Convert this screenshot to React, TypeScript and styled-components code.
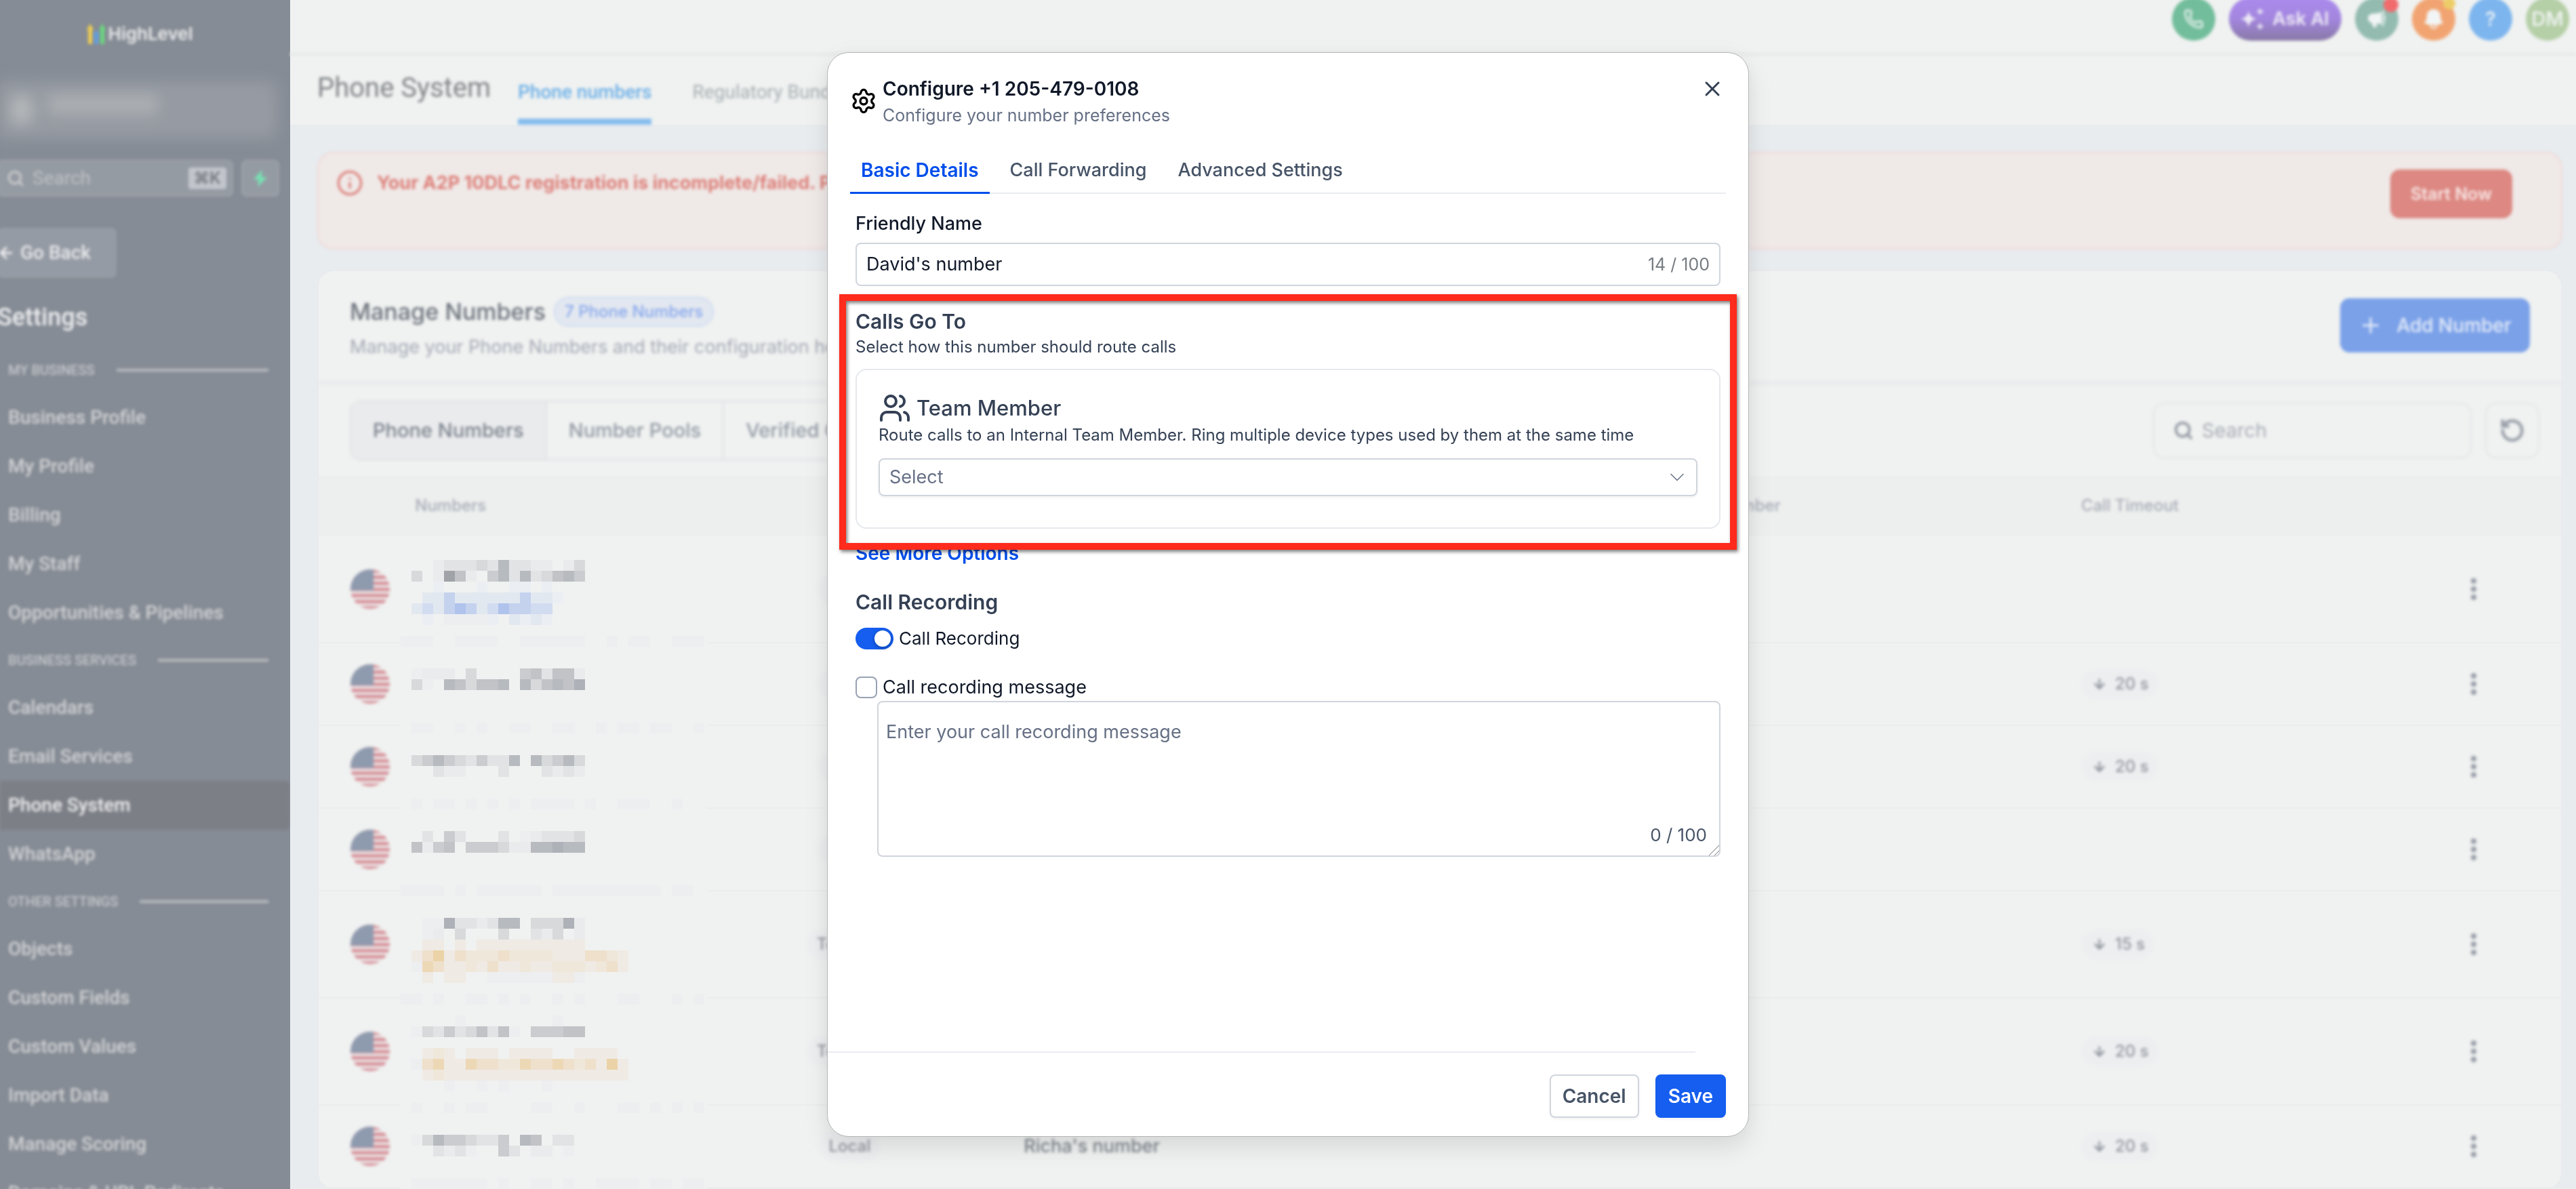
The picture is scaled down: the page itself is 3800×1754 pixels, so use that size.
import React, { useState } from "react";
import styled, { createGlobalStyle, css } from "styled-components";
import {
  ArrowDown,
  ArrowLeft,
  ChevronDown,
  Info,
  Phone,
  Plus,
  RotateCcw,
  Search,
  Settings,
  Users,
  X,
} from "lucide-react";
import { HiMegaphone, HiBell } from "react-icons/hi2";

const GlobalStyle = createGlobalStyle`
  *, *::before, *::after { box-sizing: border-box; }
  body {
    margin: 0;
    background: #eff1f1;
    font-family: Inter, "Liberation Sans", sans-serif;
    font-size: 27px;
    line-height: 40px;
    color: #101828;
  }
  button, input, select, textarea { font: inherit; color: inherit; margin: 0; }
  button { padding: 0; border: 0; background: none; cursor: pointer; }
  h1, h2, h3, p { margin: 0; font-size: inherit; font-weight: inherit; }
`;

/* Everything behind the dialog is slightly out of focus. */
const defocused = css`
  filter: blur(2px);
`;

const Page = styled.div`
  display: flex;
  height: 100vh;
  overflow: hidden;
`;

/* ---------- sidebar ---------- */

const Sidebar = styled.aside`
  flex: 0 0 428px;
  overflow: hidden;
  background: #868c95;
  color: #c9cbcd;
  font-family: Roboto, "Liberation Sans", sans-serif;
  font-size: 28px;
`;

const SidebarInner = styled.div`
  ${defocused}
`;

const Logo = styled.div`
  display: flex;
  align-items: center;
  justify-content: center;
  gap: 2px;
  height: 100px;
  padding-right: 16px;
  color: #eaebec;
  font: 600 26px/32px Inter, "Liberation Sans", sans-serif;
`;

const SidebarTop = styled.div`
  display: flex;
  flex-direction: column;
  align-items: flex-start;
  margin-left: -4px;
`;

const Account = styled.div`
  display: flex;
  align-items: center;
  gap: 24px;
  width: 412px;
  height: 84px;
  margin: 20px 0 32px;
  padding: 0 20px;
  border-radius: 12px;
  background: #969ba3;
  filter: blur(10px);
`;

const AccountAvatar = styled.div`
  width: 32px;
  height: 44px;
  border-radius: 16px;
  background: #b4b8b9;
`;

const AccountName = styled.div`
  width: 160px;
  height: 28px;
  margin-bottom: 16px;
  background: #acb0b3;
`;

const SearchRow = styled.div`
  display: flex;
  gap: 12px;
  margin-bottom: 46px;
`;

const SideSearch = styled.label`
  display: flex;
  align-items: center;
  gap: 12px;
  width: 348px;
  height: 54px;
  padding: 0 8px 0 12px;
  border: 2px solid #9fa3ab;
  border-radius: 8px;
  background: #959ba3;
`;

const SideSearchInput = styled.input`
  flex: 1;
  min-width: 0;
  padding: 0;
  border: 0;
  outline: 0;
  background: none;
  &::placeholder { color: #bdc0c5; opacity: 1; }
`;

const Shortcut = styled.kbd`
  padding: 0 8px;
  border-radius: 4px;
  background: #c2c5cc;
  color: #73777e;
  font: 600 24px/32px Inter, "DejaVu Sans", sans-serif;
`;

const QuickButton = styled.button`
  display: grid;
  place-items: center;
  width: 56px;
  height: 54px;
  border: 2px solid #9fa3ab;
  border-radius: 8px;
  background: #959ba3;
`;

const GoBack = styled.button`
  display: flex;
  align-items: center;
  gap: 8px;
  width: 176px;
  height: 74px;
  margin-bottom: 36px;
  border-radius: 8px;
  background: #959ba4;
  color: #e9eaec;
  font-weight: 500;
`;

const SidebarTitle = styled.h2`
  margin-bottom: 22px;
  color: #ebecee;
  font-size: 36px;
  line-height: 44px;
  font-weight: 500;
`;

const GroupTitle = styled.h3`
  display: flex;
  align-items: center;
  gap: 32px;
  height: 68px;
  padding: 0 32px 0 12px;
  color: #c4c6cc;
  font-size: 20px;
  font-weight: 500;
  white-space: nowrap;
  &::after { content: ""; flex: 1; height: 4px; background: #b8bbc1; }
`;

const NavLink = styled.a<{ $active?: boolean }>`
  display: flex;
  align-items: center;
  height: 72px;
  padding-left: 12px;
  border-radius: 0 8px 8px 0;
  background: ${(p) => (p.$active ? "#7c7f86" : "transparent")};
  color: ${(p) => (p.$active ? "#edeeef" : "#d0d2d4")};
  font-weight: 500;
  text-decoration: none;
  white-space: nowrap;
`;

/* ---------- main area ---------- */

const Main = styled.main`
  flex: 1;
  min-width: 0;
  display: flex;
  flex-direction: column;
  background: #e8ecef;
`;

const TopBar = styled.header`
  flex: none;
  height: 80px;
  background: #f0f2f1;
`;

const TopBarInner = styled.div`
  ${defocused}
  display: flex;
  align-items: flex-end;
  justify-content: flex-end;
  gap: 20px;
  height: 82px;
  padding: 0 10px 18px 0;
  border-bottom: 4px solid #e6e8e8;
`;

const RoundButton = styled.button<{ $tone: string }>`
  position: relative;
  display: grid;
  place-items: center;
  width: 64px;
  height: 64px;
  border-radius: 50%;
  background: ${(p) => p.$tone};
  color: #f2f5f5;
  font-size: 29px;
  font-weight: 500;
`;

const Dot = styled.span<{ $tone: string; $size: number }>`
  position: absolute;
  top: 0;
  right: 0;
  width: ${(p) => p.$size}px;
  height: ${(p) => p.$size}px;
  border-radius: 50%;
  background: ${(p) => p.$tone};
`;

const AskButton = styled.button`
  display: flex;
  align-items: center;
  justify-content: center;
  gap: 12px;
  width: 166px;
  height: 64px;
  border-radius: 32px;
  background: linear-gradient(#ab8bee, #a386de 50%, #8879a6);
  color: #eeeaf6;
  font-size: 27px;
  font-weight: 600;
`;

const PageHeader = styled.div`
  flex: none;
  background: #f0f2f1;
`;

const PageHeaderInner = styled.div`
  ${defocused}
  display: flex;
  align-items: flex-end;
  gap: 40px;
  height: 104px;
  padding-left: 40px;
`;

const PageTitle = styled.h1`
  padding-bottom: 34px;
  color: #818487;
  font: 400 40px/40px Roboto, "Liberation Sans", sans-serif;
`;

const PageTab = styled.a<{ $active?: boolean }>`
  margin-right: 20px;
  padding-bottom: 19px;
  border-bottom: 9px solid ${(p) => (p.$active ? "#85bced" : "transparent")};
  color: ${(p) => (p.$active ? "#6cafe7" : "#a6adb2")};
  font: ${(p) => (p.$active ? 500 : 400)} 28px/40px Roboto, "Liberation Sans", sans-serif;
  text-decoration: none;
`;

const Content = styled.div`
  flex: 1;
  min-height: 0;
  display: flex;
  flex-direction: column;
  gap: 30px;
  padding: 40px 20px 0 40px;
`;

const Alert = styled.section`
  ${defocused}
  flex: none;
  display: flex;
  align-items: flex-start;
  gap: 20px;
  height: 144px;
  padding: 24px 72px 0 26px;
  border: 2px solid #f0d8d7;
  border-radius: 24px;
  background: #efe9e7;
  color: #dd7f79;
`;

const AlertText = styled.p`
  flex: 1;
  font-weight: 700;
`;

const AlertButton = styled.button`
  width: 180px;
  height: 72px;
  border-radius: 14px;
  background: #dd8882;
  color: #f7e6e5;
  font-size: 25px;
  font-weight: 600;
`;

const Card = styled.section`
  flex: none;
  border: 2px solid #e8eaee;
  border-radius: 24px;
  background: #f0f2f1;
`;

const CardHead = styled.div`
  ${defocused}
  display: flex;
  justify-content: space-between;
  align-items: flex-start;
  height: 168px;
  padding: 36px 46px 0 46px;
  border-bottom: 6px solid #e8eaed;
`;

const CardTitleRow = styled.div`
  display: flex;
  align-items: center;
  gap: 12px;
  height: 48px;
`;

const CardTitle = styled.h2`
  color: #6d737d;
  font-size: 34px;
  font-weight: 500;
`;

const CountBadge = styled.span`
  padding: 0 14px;
  border: 2px solid #cddaf2;
  border-radius: 22px;
  background: #e3e8f0;
  color: #87a7ec;
  font-size: 24px;
  font-weight: 500;
`;

const CardText = styled.p`
  margin-top: 8px;
  color: #a4a8b4;
`;

const AddButton = styled.button`
  display: flex;
  align-items: center;
  justify-content: center;
  gap: 20px;
  width: 280px;
  height: 80px;
  margin-top: 4px;
  border-radius: 14px;
  background: #7ba1e9;
  color: #e6edf9;
  font-size: 28px;
  font-weight: 500;
`;

const Toolbar = styled.div`
  ${defocused}
  display: flex;
  align-items: center;
  gap: 20px;
  height: 134px;
  padding: 0 32px 0 46px;
`;

const Segments = styled.div`
  display: flex;
  height: 88px;
  border: 2px solid #dee0e3;
  border-radius: 16px;
  overflow: hidden;
`;

const Segment = styled.button<{ $active?: boolean }>`
  padding: 0 32px;
  border-right: 2px solid #dee0e3;
  background: ${(p) => (p.$active ? "#eaebed" : "transparent")};
  color: ${(p) => (p.$active ? "#7c848e" : "#929aa5")};
  font-size: 29px;
  font-weight: 500;
`;

const TableSearch = styled.label`
  display: flex;
  align-items: center;
  gap: 12px;
  width: 470px;
  height: 82px;
  margin-left: auto;
  padding: 0 28px;
  border: 2px solid #e2e4e7;
  border-radius: 16px;
  color: #949aa4;
`;

const TableSearchInput = styled.input`
  flex: 1;
  min-width: 0;
  padding: 0;
  border: 0;
  outline: 0;
  background: none;
  font-size: 29px;
  &::placeholder { color: #a8acb6; opacity: 1; }
`;

const RefreshButton = styled.button`
  display: grid;
  place-items: center;
  width: 80px;
  height: 82px;
  border: 2px solid #e2e4e7;
  border-radius: 16px;
  color: #9ba0aa;
`;

const TableWrap = styled.div`
  position: relative;
`;

const Table = styled.table`
  width: 100%;
  table-layout: fixed;
  border-collapse: collapse;
`;

const HeadCell = styled.th<{ $center?: boolean; $indent?: number }>`
  height: 88px;
  padding: 0 0 0 ${(p) => p.$indent ?? 0}px;
  background: #edefee;
  color: #a8acb7;
  font-size: 24px;
  font-weight: 500;
  text-align: ${(p) => (p.$center ? "center" : "left")};
  white-space: nowrap;
  & > span { ${defocused} display: block; }
`;

const Row = styled.tr<{ $tall?: boolean }>`
  height: ${(p) => (p.$tall ? 158 : 122)}px;
  border-bottom: 2px solid #ebeded;
`;

const Cell = styled.td<{ $center?: boolean; $indent?: number }>`
  padding: 0 0 0 ${(p) => p.$indent ?? 0}px;
  text-align: ${(p) => (p.$center ? "center" : "left")};
`;

const Pill = styled.span`
  ${defocused}
  display: inline-flex;
  align-items: center;
  gap: 12px;
  height: 44px;
  padding: 0 14px 0 16px;
  border-radius: 22px;
  background: #edeef0;
  color: #8f949d;
  font-size: 24px;
  font-weight: 500;
`;

const RowName = styled.span`
  ${defocused}
  display: block;
  color: #7f858d;
  font-weight: 500;
`;

const FlagIcon = styled.svg`
  ${defocused}
  display: block;
`;

const MoreButton = styled.button`
  ${defocused}
  display: inline-grid;
  place-items: center;
  width: 48px;
  height: 48px;
  vertical-align: middle;
`;

/* Pixelated strip that hides the phone numbers. */
const Redaction = styled.svg`
  position: absolute;
  top: 124px;
  left: 121px;
`;

/* ---------- dialog ---------- */

const Backdrop = styled.div`
  position: fixed;
  inset: 0;
  display: flex;
  align-items: center;
  justify-content: center;
`;

const Dialog = styled.div`
  display: flex;
  flex-direction: column;
  width: 1360px;
  max-width: 100%;
  min-height: calc(100vh - 154px);
  padding: 33px 33px 27px;
  border: 1px solid #b4b6b6;
  border-radius: 32px;
  background: #fff;
  box-shadow: 0 16px 36px rgba(0, 0, 0, 0.1), 0 0 32px rgba(0, 0, 0, 0.03);
`;

const DialogHead = styled.header`
  display: flex;
  align-items: flex-start;
  gap: 8px;
`;

const HeadIcon = styled.span`
  display: grid;
  place-items: center;
  width: 40px;
  height: 76px;
  color: #000;
`;

const HeadText = styled.div`
  flex: 1;
`;

const DialogTitle = styled.h2`
  font-size: 28px;
  font-weight: 600;
`;

const DialogSubtitle = styled.p`
  color: #667085;
  font-size: 25px;
  line-height: 38px;
`;

const CloseButton = styled.button`
  display: grid;
  place-items: center;
  width: 40px;
  height: 40px;
  color: #344054;
`;

const Tabs = styled.div`
  display: flex;
  gap: 14px;
  margin-top: 42px;
  box-shadow: inset 0 -2px #e9ebf0;
`;

const Tab = styled.button<{ $active?: boolean }>`
  padding: 0 16px 12px;
  border-bottom: 3px solid ${(p) => (p.$active ? "#004eeb" : "transparent")};
  color: ${(p) => (p.$active ? "#004eeb" : "#475467")};
  font-size: ${(p) => (p.$active ? 28 : 27)}px;
  font-weight: ${(p) => (p.$active ? 600 : 500)};
`;

const DialogBody = styled.div`
  flex: 1;
  padding: 24px 8px 0;
`;

const FieldLabel = styled.label`
  display: block;
  margin-bottom: 8px;
  font-weight: 500;
`;

const TextBox = styled.div`
  display: flex;
  align-items: center;
  height: 64px;
  padding: 0 14px;
  border: 2px solid #d0d5dd;
  border-radius: 8px;
`;

const TextInput = styled.input`
  flex: 1;
  min-width: 0;
  padding: 0;
  border: 0;
  outline: 0;
  background: none;
`;

const Counter = styled.span`
  color: #767c82;
  font-size: 25px;
`;

const RouteSection = styled.section`
  position: relative;
  margin-top: 32px;
`;

const Highlight = styled.div`
  position: absolute;
  inset: -20px -24px -31px;
  border: 10px solid #ff2b1c;
  box-shadow: 2px 3px 5px rgba(0, 0, 0, 0.5), inset 2px 3px 5px rgba(0, 0, 0, 0.5);
  pointer-events: none;
`;

const SectionTitle = styled.h3`
  color: #344054;
  font-size: 30px;
  font-weight: 600;
`;

const SmallText = styled.p`
  color: #344054;
  font-size: 24px;
  line-height: 36px;
`;

const RouteCard = styled.div`
  margin-top: 14px;
  padding: 34px 32px 46px;
  border: 2px solid #e6e8ec;
  border-radius: 16px;
`;

const RouteTitle = styled.h3`
  display: flex;
  align-items: center;
  gap: 8px;
  height: 44px;
  color: #344054;
  font-size: 31px;
  font-weight: 500;
`;

const SelectBox = styled.div`
  display: grid;
  align-items: center;
  margin-top: 16px;
  color: #667085;
  & > * { grid-area: 1 / 1; }
  & > svg { justify-self: end; margin-right: 12px; pointer-events: none; }
`;

const Select = styled.select`
  width: 100%;
  height: 56px;
  padding: 0 14px;
  border: 2px solid #d0d5dd;
  border-radius: 8px;
  background: #fff;
  box-shadow: 0 2px 4px rgba(16, 24, 40, 0.06);
  appearance: none;
`;

const MoreLink = styled.a`
  display: block;
  margin: 16px 0 32px;
  color: #004eeb;
  font-size: 28px;
  font-weight: 600;
  text-decoration: none;
`;

const SwitchRow = styled.label`
  display: flex;
  align-items: center;
  gap: 8px;
  height: 32px;
  margin-top: 18px;
  font-size: 26px;
`;

const Switch = styled.input`
  appearance: none;
  width: 56px;
  height: 32px;
  border-radius: 16px;
  background: #98a2b3;
  &::before {
    content: "";
    display: block;
    width: 24px;
    height: 24px;
    margin: 4px;
    border-radius: 50%;
    background: #fff;
    box-shadow: 0 2px 6px rgba(0, 0, 0, 0.3);
  }
  &:checked { background: #155eef; }
  &:checked::before { margin-left: 28px; }
`;

const CheckRow = styled.label`
  display: flex;
  align-items: center;
  gap: 8px;
  height: 32px;
  margin: 40px 0 4px;
`;

const CheckBox = styled.input`
  appearance: none;
  width: 32px;
  height: 32px;
  border: 2px solid #98a2b3;
  border-radius: 8px;
  background: #fff;
  &:checked { background: #155eef; }
`;

const MessageBox = styled.div`
  position: relative;
  margin-left: 32px;
`;

const Message = styled.textarea`
  display: block;
  width: 100%;
  height: 230px;
  padding: 24px 11px 40px;
  border: 2px solid #d0d5dd;
  border-radius: 8px;
  outline: 0;
  resize: none;
  &::placeholder { color: #667085; opacity: 1; }
`;

const MessageCounter = styled.span`
  position: absolute;
  right: 20px;
  bottom: 12px;
  color: #475467;
  font-size: 26px;
`;

const ResizeGrip = styled.svg`
  position: absolute;
  right: 2px;
  bottom: 2px;
  cursor: ns-resize;
`;

const FootRule = styled.hr`
  width: calc(100% - 12px);
  height: 2px;
  margin: 0 0 32px -33px;
  border: 0;
  background: #eaecf0;
`;

const DialogFoot = styled.footer`
  display: flex;
  justify-content: flex-end;
  gap: 24px;
`;

const FootButton = styled.button<{ $primary?: boolean }>`
  height: 64px;
  padding: 0 17px;
  border: 2px solid ${(p) => (p.$primary ? "#155eef" : "#d0d5dd")};
  border-radius: 8px;
  background: ${(p) => (p.$primary ? "#155eef" : "#fff")};
  box-shadow: 0 2px 4px rgba(16, 24, 40, 0.05);
  color: ${(p) => (p.$primary ? "#fff" : "#475467")};
  font-size: 28px;
  font-weight: 600;
`;

/* ---------- drawings ---------- */

const LogoMark = () => (
  <svg width="30" height="32" viewBox="0 0 30 32" aria-hidden="true">
    <path d="M5 8v23" stroke="#efcd52" strokeWidth="6" />
    <path d="M0 10l5-9 5 9z" fill="#efcd52" />
    <path d="M14 16v15" stroke="#629fe0" strokeWidth="6" />
    <path d="M9 18l5-8 5 8z" fill="#629fe0" />
    <path d="M23 8v23" stroke="#68d87e" strokeWidth="6" />
    <path d="M18 10l5-9 5 9z" fill="#68d87e" />
  </svg>
);

const Bolt = () => (
  <svg width="22" height="28" viewBox="0 0 24 28" aria-hidden="true">
    <path d="M15 0L1 16h8l-1 12 15-16h-9z" fill="#78e0b3" />
  </svg>
);

const Sparkles = () => (
  <svg width="34" height="34" viewBox="0 0 34 34" fill="currentColor" aria-hidden="true">
    <path d="M11 5c2 8 4 10 12 12-8 2-10 4-12 12-2-8-4-10-12-12 8-2 10-4 12-12z" />
    <path d="M28 0c1 4 2 5 6 6-4 1-5 2-6 6-1-4-2-5-6-6 4-1 5-2 6-6z" />
    <path d="M28 22c1 4 2 5 6 6-4 1-5 2-6 6-1-4-2-5-6-6 4-1 5-2 6-6z" />
  </svg>
);

const MoreDots = () => (
  <svg width="10" height="36" viewBox="0 0 10 36" fill="#959aa5" aria-hidden="true">
    <circle cx="5" cy="6" r="4" />
    <circle cx="5" cy="18" r="4" />
    <circle cx="5" cy="30" r="4" />
  </svg>
);

const Flag = ({ id }: { id: string }) => (
  <FlagIcon width="58" height="58" viewBox="0 0 58 58" role="img" aria-label="United States">
    <clipPath id={id}>
      <circle cx="29" cy="29" r="29" />
    </clipPath>
    <g clipPath={`url(#${id})`}>
      <rect width="58" height="58" fill="#ebe9ea" />
      {[0, 1, 2, 3, 4, 5, 6].map((n) => (
        <rect key={n} y={n * 9} width="58" height="5" fill="#d68e96" />
      ))}
      <rect width="34" height="31" fill="#8e9aae" />
    </g>
  </FlagIcon>
);

const Grip = () => (
  <ResizeGrip width="16" height="16" viewBox="0 0 16 16" stroke="#6f6f6f" strokeWidth="1" aria-hidden="true">
    <path d="M1 16L16 1M9 16l7-7" />
  </ResizeGrip>
);

const SHADES: Record<string, string> = {
  f: "#edeef0", "1": "#e9ebec", "2": "#e2e3e5", "3": "#d7d9db", "4": "#cacccf",
  "5": "#c1c3c7", "6": "#b7bbbf", "7": "#aeb1b7", "8": "#a0a3a8",
  a: "#ebeef3", b: "#e2e8f0", c: "#d2dcf0", d: "#c4d2ee", e: "#afc3ed",
  p: "#efeae4", q: "#efe7da", r: "#eee0cb", s: "#edd8b6", t: "#ebd3a7",
};

/* One string per 16px line; each letter is one 16px block, "." is clear. */
const BLOCKS: Record<number, string> = {
  0: "...12223262211.13",
  1: ".3.1851.462623564",
  2: "...a...a..aa.a",
  3: "..bbdbbbbbbdbba",
  4: ".bcbdedbceddcc",
  5: "..a.ffffa.baba",
  7: "fff..ffff..ffffff..f.ff..fff",
  10: ".f111.3....452551",
  11: ".3f.653556.635657",
  15: ".ff..f.f..ff..ff..f.ff.ff..f",
  18: ".3464324226.63463",
  19: "...211...2...2121",
  22: ".f.ff.f.f.f.ffff.f..fff..f.",
  25: "..2.42...2.f12223",
  26: ".5145.44431166766",
  30: "ffff.f.ffffff.ffffffffff.ff",
  33: "..ff7221266.33371",
  34: "..f1.3...3..213.1",
  35: "..pp.p.pppppppppp",
  36: ".prtprqqqrqqqqppprrqp",
  37: ".fsrppqprppqppqqqpqrp",
  38: "..p.pp..ffffffppf",
  40: "ff.f..ff.f.f..f.f...ff...f.f",
  42: ".....f........f",
  43: ".f32423525f.44455",
  45: "..pqp.ppp.pppp..pppp",
  46: ".frsppsrrqqsrrsrqrptp",
  47: "..pqppppppppppppppppp",
  48: "....f..f.f...f",
  50: ".f..f.ff....ff..f...ff.f.f.f",
  53: ".f36443224.65.22",
  54: "...212f..42.11.f",
  57: ".fffffff.f..ff.f..ffff.ff.ff",
};

const RedactionStrip = () => (
  <Redaction width="452" height="928" viewBox="0 0 452 928" aria-hidden="true" shapeRendering="crispEdges">
    {[7, 15, 22, 30, 40, 50, 57].map((line) => (
      <rect key={line} y={line * 16} width="452" height="16" fill="#f0f2f1" />
    ))}
    {Object.entries(BLOCKS).flatMap(([line, cells]) =>
      cells.split("").map((c, i) =>
        c === "." ? null : (
          <rect key={`${line}-${i}`} x={i * 16} y={Number(line) * 16} width="16" height="16" fill={SHADES[c]} />
        ),
      ),
    )}
  </Redaction>
);

/* ---------- data ---------- */

const GROUPS = [
  {
    title: "MY BUSINESS",
    links: ["Business Profile", "My Profile", "Billing", "My Staff", "Opportunities & Pipelines"],
  },
  { title: "BUSINESS SERVICES", links: ["Calendars", "Email Services", "Phone System", "WhatsApp"] },
  {
    title: "OTHER SETTINGS",
    links: ["Objects", "Custom Fields", "Custom Values", "Import Data", "Manage Scoring", "Domains & URL Redirects"],
  },
];

const ROWS = [
  { tall: true, type: "Local", name: "", timeout: "" },
  { type: "Local", name: "", timeout: "20 s" },
  { type: "Local", name: "", timeout: "20 s" },
  { type: "Local", name: "", timeout: "" },
  { tall: true, type: "Toll Free", name: "", timeout: "15 s" },
  { tall: true, type: "Toll Free", name: "", timeout: "20 s" },
  { type: "Local", name: "Richa's number", timeout: "20 s" },
];

const COLUMNS = ["4.3%", "14.7%", "9.3%", "30%", "20.3%", "13.6%", "7.8%"];

export default function App() {
  const [name, setName] = useState("David's number");
  const [recording, setRecording] = useState(true);
  const [announce, setAnnounce] = useState(false);
  const [message, setMessage] = useState("");

  return (
    <>
      <GlobalStyle />
      <Page>
        <Sidebar>
          <SidebarInner>
            <Logo>
              <LogoMark />
              HighLevel
            </Logo>
            <SidebarTop>
              <Account>
                <AccountAvatar />
                <AccountName />
              </Account>
              <SearchRow>
                <SideSearch>
                  <Search size={26} strokeWidth={3} />
                  <SideSearchInput placeholder="Search" aria-label="Search menu" />
                  <Shortcut>⌘K</Shortcut>
                </SideSearch>
                <QuickButton aria-label="Quick actions">
                  <Bolt />
                </QuickButton>
              </SearchRow>
              <GoBack>
                <ArrowLeft size={26} strokeWidth={3} />
                Go Back
              </GoBack>
              <SidebarTitle>Settings</SidebarTitle>
            </SidebarTop>
            <nav>
              {GROUPS.map((group) => (
                <React.Fragment key={group.title}>
                  <GroupTitle>{group.title}</GroupTitle>
                  {group.links.map((link) => (
                    <NavLink key={link} href="#" $active={link === "Phone System"}>
                      {link}
                    </NavLink>
                  ))}
                </React.Fragment>
              ))}
            </nav>
          </SidebarInner>
        </Sidebar>

        <Main>
          <TopBar>
            <TopBarInner>
              <RoundButton $tone="#72bd9b" aria-label="Phone">
                <Phone size={30} />
              </RoundButton>
              <AskButton>
                <Sparkles />
                Ask AI
              </AskButton>
              <RoundButton $tone="#93bbb0" aria-label="Announcements">
                <HiMegaphone size={32} />
                <Dot $tone="#f16b6d" $size={22} />
              </RoundButton>
              <RoundButton $tone="#f1a471" aria-label="Notifications">
                <HiBell size={36} />
                <Dot $tone="#edcd68" $size={18} />
              </RoundButton>
              <RoundButton $tone="#7db5ee" aria-label="Help">
                ?
              </RoundButton>
              <RoundButton $tone="#b5cfa7" aria-label="Profile">
                DM
              </RoundButton>
            </TopBarInner>
          </TopBar>

          <PageHeader>
            <PageHeaderInner>
              <PageTitle>Phone System</PageTitle>
              <PageTab href="#" $active>
                Phone numbers
              </PageTab>
              <PageTab href="#">Regulatory Bundles</PageTab>
            </PageHeaderInner>
          </PageHeader>

          <Content>
            <Alert>
              <Info size={40} />
              <AlertText>Your A2P 10DLC registration is incomplete/failed. Please complete it now.</AlertText>
              <AlertButton>Start Now</AlertButton>
            </Alert>

            <Card>
              <CardHead>
                <div>
                  <CardTitleRow>
                    <CardTitle>Manage Numbers</CardTitle>
                    <CountBadge>7 Phone Numbers</CountBadge>
                  </CardTitleRow>
                  <CardText>Manage your Phone Numbers and their configuration here</CardText>
                </div>
                <AddButton>
                  <Plus size={36} />
                  Add Number
                </AddButton>
              </CardHead>
              <Toolbar>
                <Segments>
                  <Segment $active>Phone Numbers</Segment>
                  <Segment>Number Pools</Segment>
                  <Segment>Verified Caller IDs</Segment>
                </Segments>
                <TableSearch>
                  <Search size={30} strokeWidth={3} />
                  <TableSearchInput placeholder="Search" aria-label="Search numbers" />
                </TableSearch>
                <RefreshButton aria-label="Refresh">
                  <RotateCcw size={38} strokeWidth={3} />
                </RefreshButton>
              </Toolbar>
              <TableWrap>
                <Table>
                  <colgroup>
                    {COLUMNS.map((width, i) => (
                      <col key={i} style={{ width }} />
                    ))}
                  </colgroup>
                  <thead>
                    <tr>
                      <HeadCell />
                      <HeadCell><span>Numbers</span></HeadCell>
                      <HeadCell $center><span>Type</span></HeadCell>
                      <HeadCell $indent={104}><span>Name</span></HeadCell>
                      <HeadCell><span>Forwarding Number</span></HeadCell>
                      <HeadCell><span>Call Timeout</span></HeadCell>
                      <HeadCell />
                    </tr>
                  </thead>
                  <tbody>
                    {ROWS.map((row, i) => (
                      <Row key={i} $tall={row.tall}>
                        <Cell $indent={47}>
                          <Flag id={`flag-${i}`} />
                        </Cell>
                        <Cell />
                        <Cell $center>
                          <Pill>{row.type}</Pill>
                        </Cell>
                        <Cell $indent={104}>
                          <RowName>{row.name}</RowName>
                        </Cell>
                        <Cell />
                        <Cell>
                          {row.timeout && (
                            <Pill>
                              <ArrowDown size={22} strokeWidth={3} />
                              {row.timeout}
                            </Pill>
                          )}
                        </Cell>
                        <Cell $center>
                          <MoreButton aria-label="More actions">
                            <MoreDots />
                          </MoreButton>
                        </Cell>
                      </Row>
                    ))}
                  </tbody>
                </Table>
                <RedactionStrip />
              </TableWrap>
            </Card>
          </Content>
        </Main>
      </Page>

      <Backdrop>
        <Dialog role="dialog" aria-modal="true" aria-labelledby="dialog-title">
          <DialogHead>
            <HeadIcon>
              <Settings size={40} />
            </HeadIcon>
            <HeadText>
              <DialogTitle id="dialog-title">Configure +1 205-479-0108</DialogTitle>
              <DialogSubtitle>Configure your number preferences</DialogSubtitle>
            </HeadText>
            <CloseButton aria-label="Close">
              <X size={36} />
            </CloseButton>
          </DialogHead>

          <Tabs role="tablist">
            <Tab role="tab" $active>Basic Details</Tab>
            <Tab role="tab">Call Forwarding</Tab>
            <Tab role="tab">Advanced Settings</Tab>
          </Tabs>

          <DialogBody>
            <FieldLabel htmlFor="friendly-name">Friendly Name</FieldLabel>
            <TextBox>
              <TextInput
                id="friendly-name"
                value={name}
                maxLength={100}
                onChange={(e) => setName(e.target.value)}
              />
              <Counter>{name.length} / 100</Counter>
            </TextBox>

            <RouteSection>
              <SectionTitle>Calls Go To</SectionTitle>
              <SmallText>Select how this number should route calls</SmallText>
              <RouteCard>
                <RouteTitle>
                  <Users size={48} />
                  <label htmlFor="team-member">Team Member</label>
                </RouteTitle>
                <SmallText>
                  Route calls to an Internal Team Member. Ring multiple device types used by them at the same time
                </SmallText>
                <SelectBox>
                  <Select id="team-member" defaultValue="">
                    <option value="">Select</option>
                  </Select>
                  <ChevronDown size={36} strokeWidth={1} />
                </SelectBox>
              </RouteCard>
              <Highlight />
            </RouteSection>

            <MoreLink href="#">See More Options</MoreLink>

            <SectionTitle>Call Recording</SectionTitle>
            <SwitchRow>
              <Switch
                type="checkbox"
                role="switch"
                checked={recording}
                onChange={(e) => setRecording(e.target.checked)}
              />
              Call Recording
            </SwitchRow>
            <CheckRow>
              <CheckBox type="checkbox" checked={announce} onChange={(e) => setAnnounce(e.target.checked)} />
              Call recording message
            </CheckRow>
            <MessageBox>
              <Message
                aria-label="Call recording message"
                placeholder="Enter your call recording message"
                value={message}
                maxLength={100}
                onChange={(e) => setMessage(e.target.value)}
              />
              <MessageCounter>{message.length} / 100</MessageCounter>
              <Grip />
            </MessageBox>
          </DialogBody>

          <FootRule />
          <DialogFoot>
            <FootButton>Cancel</FootButton>
            <FootButton $primary>Save</FootButton>
          </DialogFoot>
        </Dialog>
      </Backdrop>
    </>
  );
}
